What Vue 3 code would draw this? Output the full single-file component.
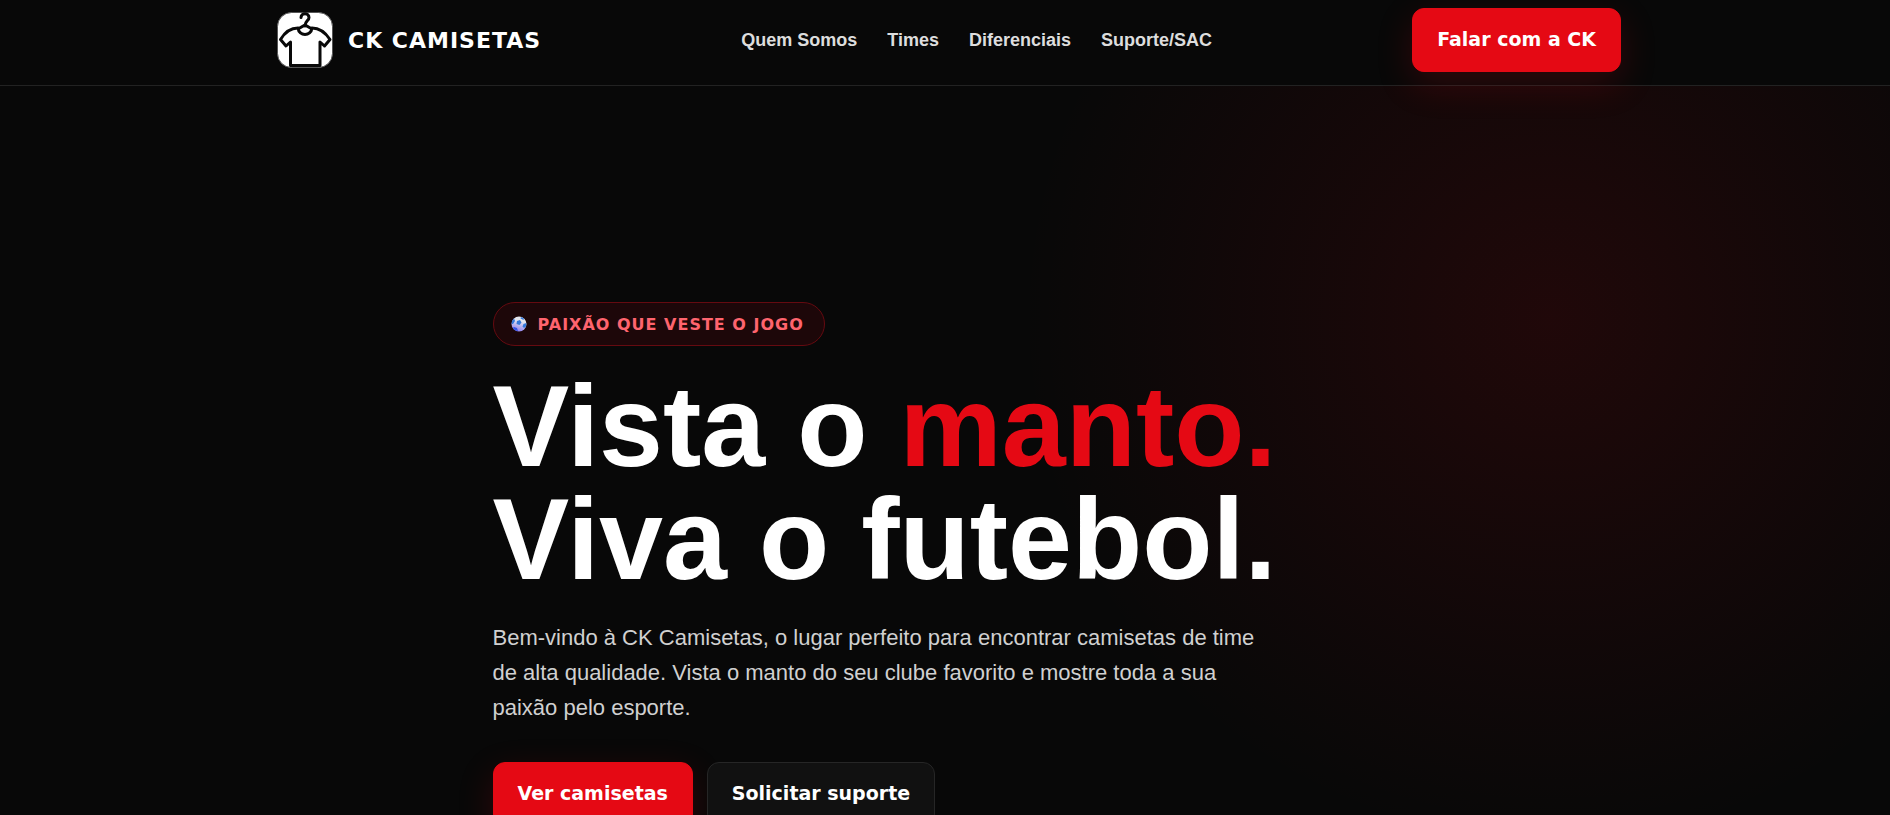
<script setup>
const links = ['Quem Somos', 'Times', 'Diferenciais', 'Suporte/SAC']
</script>

<template>
  <div class="page">
    <header class="header">
      <div class="bar">
        <a class="brand" href="#inicio">
          <svg class="logo" viewBox="0 0 56 56" aria-hidden="true">
            <rect x="0.5" y="0.5" width="55" height="55" rx="14" fill="#fff" stroke="#555" />
            <g fill="none" stroke="#090909" stroke-width="3">
              <path d="M24 5.500C24 0.500 32 0.500 32 5.500C32 9 28 8.500 28 14" stroke-linecap="round" />
              <path d="M21 17L28 13L35 17" />
              <path d="M13.500 53.500V30L9 34L3.500 27.500C8 20 13 16 21 16C22 24.500 34 24.500 35 16C43 16 48 20 53 27.500L47.500 34L43 30V53.500Z" stroke-linejoin="round" />
            </g>
          </svg>
          <span>CK CAMISETAS</span>
        </a>
        <nav class="nav" aria-label="Principal">
          <a v-for="link in links" :key="link" href="#">{{ link }}</a>
        </nav>
        <button class="btn primary" type="button">Falar com a CK</button>
      </div>
    </header>

    <main class="hero">
      <div class="content">
        <div class="badge">
          <svg class="ball" viewBox="0 0 16 16" aria-hidden="true">
            <defs>
              <linearGradient id="ball-shade" x1="0.7" y1="0" x2="0.4" y2="1">
                <stop offset="0.3" stop-color="#e4e6ee" />
                <stop offset="1" stop-color="#8d7df0" />
              </linearGradient>
            </defs>
            <circle cx="8" cy="8" r="7.500" fill="url(#ball-shade)" />
            <g fill="#3479dc">
              <path d="M6 5L9 4L10.500 6.500L8.500 9L5.500 8Z" />
              <path d="M1 5L3 2.500L4 5L2 8L0.700 8Z" />
              <path d="M10 0.900L13 2.500L12.500 4L9.500 2.500Z" />
              <path d="M12.500 8L15.300 7L15 10.500L13 12L11.500 10.500Z" />
              <path d="M3 11L6 12L7 15.300L3.500 14L1.800 12Z" fill="#3554e8" />
            </g>
          </svg>
          <span>PAIXÃO QUE VESTE O JOGO</span>
        </div>
        <h1>Vista o <em>manto.</em><br />Viva o futebol.</h1>
        <p>
          Bem-vindo à CK Camisetas, o lugar perfeito para encontrar camisetas de time
          de alta qualidade. Vista o manto do seu clube favorito e mostre toda a sua
          paixão pelo esporte.
        </p>
        <div class="actions">
          <button class="btn primary" type="button">Ver camisetas</button>
          <button class="btn outline" type="button">Solicitar suporte</button>
        </div>
      </div>
    </main>
  </div>
</template>

<style>
body {
  margin: 0;
  background: #080808;
}
</style>

<style scoped>
.page {
  height: 100vh;
  overflow: hidden;
  display: flex;
  flex-direction: column;
  background: #080808;
  color: #fff;
  font-family: "Liberation Sans", Arial, sans-serif;
}
.header {
  flex: none;
  padding: 8px 0 13px 8px;
  border-bottom: 1px solid #222;
  z-index: 1;
}
.bar {
  max-width: 1344px;
  margin: 0 auto;
  display: flex;
  align-items: center;
  justify-content: space-between;
}
.brand {
  display: flex;
  align-items: center;
  gap: 15px;
  color: #fff;
  text-decoration: none;
  font-family: "Arial Black", "DejaVu Sans", sans-serif;
  font-weight: 900;
  font-size: 22px;
  letter-spacing: 1px;
}
.logo {
  width: 56px;
  height: 56px;
}
.nav {
  display: flex;
  gap: 30px;
}
.nav a {
  color: #ddd;
  font-size: 18px;
  font-weight: 700;
  text-decoration: none;
}
.btn {
  height: 64px;
  padding: 0 24px 2px;
  border: 1px solid transparent;
  border-radius: 12px;
  color: #fff;
  font-family: "Arial Black", "DejaVu Sans", sans-serif;
  font-weight: 900;
  font-size: 19px;
  white-space: nowrap;
}
.primary {
  background: #e50914;
  border-color: #e50914;
  box-shadow: 0 12px 36px rgba(229, 9, 20, 0.18);
}
.outline {
  background: #111;
  border-color: #262626;
}
.hero {
  flex: 1 0 auto;
  padding: 216px 0 0 8px;
  background: radial-gradient(circle at 82% 232px, rgba(229, 9, 20, 0.11), transparent 530px);
}
.content {
  max-width: 913px;
  margin: 0 auto;
}
.badge {
  box-sizing: border-box;
  display: inline-flex;
  align-items: center;
  gap: 11px;
  height: 44px;
  padding: 0 20px 0 17px;
  border: 1px solid #650a10;
  border-radius: 22px;
  background: #1d0709;
  color: #ff646e;
  font-family: "Arial Black", "DejaVu Sans", sans-serif;
  font-size: 16px;
  font-weight: 900;
  letter-spacing: 1px;
  vertical-align: top;
}
.ball {
  width: 16px;
  height: 16px;
}
h1 {
  margin: 24px 0 0;
  font-size: 115px;
  line-height: 113px;
  font-weight: 700;
}
h1 em {
  color: #e50914;
  font-style: normal;
}
p {
  max-width: 790px;
  margin: 24px 0 0;
  color: #d0d0d0;
  font-size: 22px;
  line-height: 1.6;
}
.actions {
  display: flex;
  gap: 14px;
  margin-top: 36px;
}
</style>
